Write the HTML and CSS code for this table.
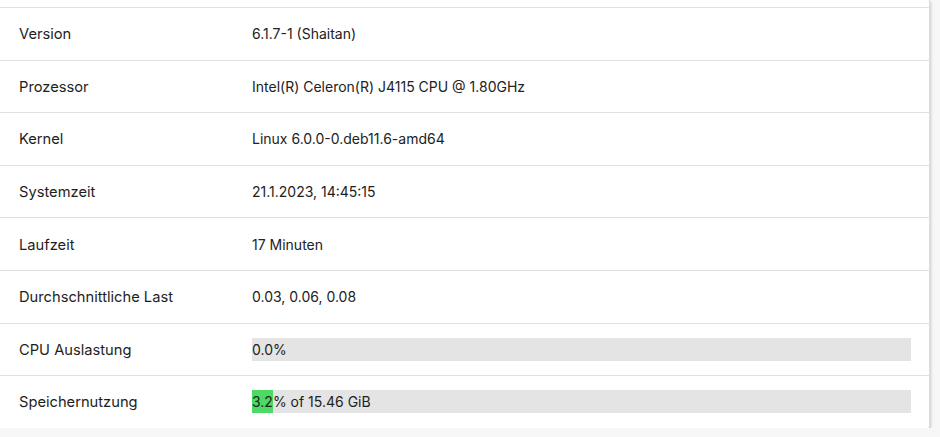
FILE: index.html
```html
<!DOCTYPE html>
<html lang="de">
<head>
<meta charset="utf-8">
<title>Status</title>
<link rel="stylesheet" href="styles.css">
</head>
<body>
<div class="card">
  <table class="info">
    <colgroup><col class="col-label"><col class="col-value"></colgroup>
    <tbody>
      <tr><td class="label">Version</td><td>6.1.7-1 (Shaitan)</td></tr>
      <tr><td class="label">Prozessor</td><td>Intel(R) Celeron(R) J4115 CPU @ 1.80GHz</td></tr>
      <tr><td class="label">Kernel</td><td>Linux 6.0.0-0.deb11.6-amd64</td></tr>
      <tr><td class="label">Systemzeit</td><td>21.1.2023, 14:45:15</td></tr>
      <tr><td class="label">Laufzeit</td><td>17 Minuten</td></tr>
      <tr><td class="label">Durchschnittliche Last</td><td>0.03, 0.06, 0.08</td></tr>
      <tr><td class="label">CPU Auslastung</td><td><div class="bar"><div class="fill" style="width:0%"></div><span class="bar-text">0.0%</span></div></td></tr>
      <tr><td class="label">Speichernutzung</td><td><div class="bar"><div class="fill" style="width:3.2%"></div><span class="bar-text">3.2% of 15.46 GiB</span></div></td></tr>
    </tbody>
  </table>
</div>
</body>
</html>
```
FILE: styles.css
```css
html, body {
  margin: 0;
  padding: 0;
  background: #f7f7f7;
  font-family: Inter, "Noto Sans", sans-serif;
  font-size: 14px;
  color: #222;
}
.card {
  width: 931px;
  margin-left: -1px;
  padding-top: 7px;
  background: #fff;
  border-right: 1px solid #dcdcdc;
  box-shadow: 1px 2px 3px rgba(0,0,0,0.18);
  border-radius: 0 0 2px 2px;
  box-sizing: border-box;
}
.info {
  width: 930px;
  border-collapse: collapse;
  table-layout: fixed;
}
.col-label {
  width: 253px;
}
.info tr {
  border-top: 1px solid #e0e0e0;
}
.info td {
  height: 51.6px;
  padding: 0 18px 0 0;
  vertical-align: middle;
  line-height: 21px;
}
.info td.label {
  height: 49.6px;
  padding-left: 20px;
  padding-top: 2px;
  font-size: 14.7px;
  color: #1e1e1e;
}
.bar {
  position: relative;
  height: 23px;
  background: #e4e4e4;
}
.fill {
  position: absolute;
  left: 0;
  top: 0;
  bottom: 0;
  background: #4cd964;
}
.bar-text {
  position: relative;
  line-height: 23px;
}
```
